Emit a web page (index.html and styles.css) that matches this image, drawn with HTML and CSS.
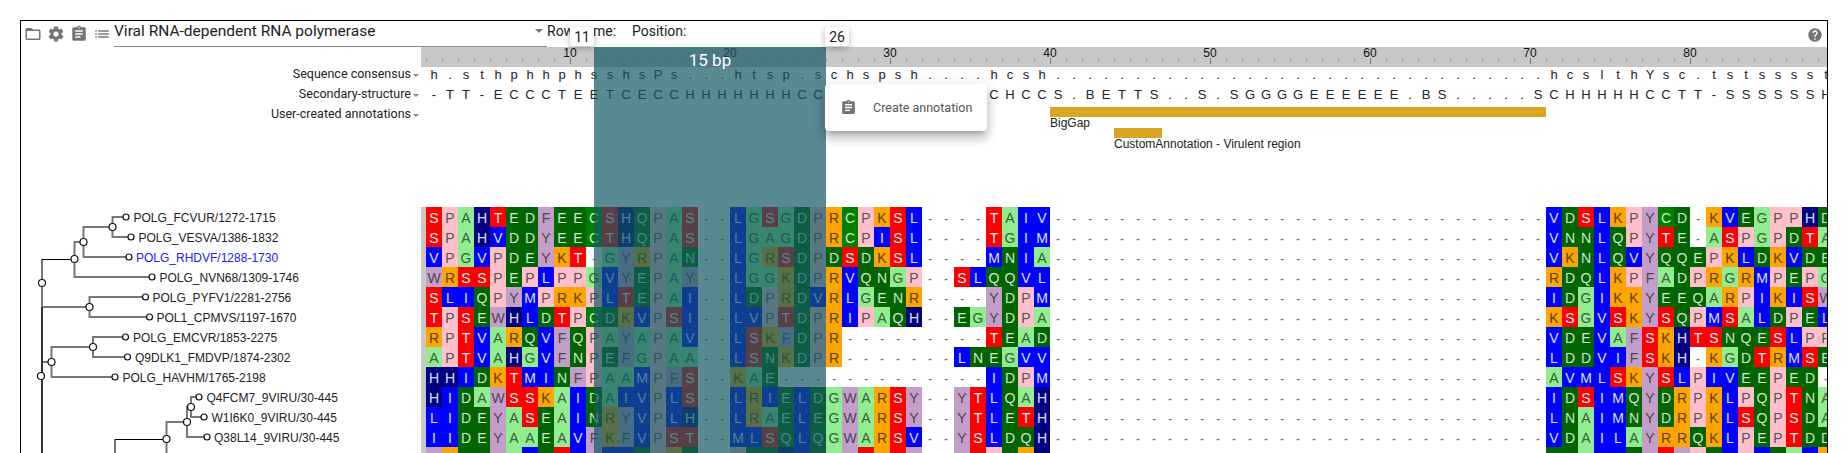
FILE: index.html
```html
<!DOCTYPE html>
<html lang="en">
<head>
    <meta charset="UTF-8">
    <title>Viral RNA-dependent RNA polymerase</title>
    <link rel="stylesheet" href="styles.css">
</head>
<body>
    <div class="frame">
        <div class="toolbar">
            <div class="toolbar-icons">
                <svg class="icon" viewBox="0 0 24 24"><path d="M20 6h-8l-2-2H4c-1.1 0-1.99.9-1.99 2L2 18c0 1.1.9 2 2 2h16c1.1 0 2-.9 2-2V8c0-1.1-.9-2-2-2zm0 12H4V8h16v10z"/></svg>
                <svg class="icon" viewBox="0 0 24 24"><path d="M19.43 12.98c.04-.32.07-.64.07-.98s-.03-.66-.07-.98l2.11-1.65c.19-.15.24-.42.12-.64l-2-3.46c-.12-.22-.39-.3-.61-.22l-2.49 1c-.52-.4-1.08-.73-1.69-.98l-.38-2.65C14.46 2.18 14.25 2 14 2h-4c-.25 0-.46.18-.49.42l-.38 2.65c-.61.25-1.17.59-1.69.98l-2.49-1c-.23-.09-.49 0-.61.22l-2 3.46c-.13.22-.07.49.12.64l2.11 1.65c-.04.32-.07.65-.07.98s.03.66.07.98l-2.11 1.65c-.19.15-.24.42-.12.64l2 3.46c.12.22.39.3.61.22l2.49-1c.52.4 1.08.73 1.69.98l.38 2.65c.03.24.24.42.49.42h4c.25 0 .46-.18.49-.42l.38-2.65c.61-.25 1.17-.59 1.69-.98l2.49 1c.23.09.49 0 .61-.22l2-3.46c.12-.22.07-.49-.12-.64l-2.11-1.65zM12 15.5c-1.93 0-3.5-1.57-3.5-3.5s1.57-3.5 3.5-3.5 3.5 1.57 3.5 3.5-1.57 3.5-3.5 3.5z"/></svg>
                <svg class="icon" viewBox="0 0 24 24"><path d="M19 3h-4.18C14.4 1.84 13.3 1 12 1c-1.3 0-2.4.84-2.82 2H5c-1.1 0-2 .9-2 2v14c0 1.1.9 2 2 2h14c1.1 0 2-.9 2-2V5c0-1.1-.9-2-2-2zm-7 0c.55 0 1 .45 1 1s-.45 1-1 1-1-.45-1-1 .45-1 1-1zm2 14H7v-2h7v2zm3-4H7v-2h10v2zm0-4H7V7h10v2z"/></svg>
                <svg class="icon" viewBox="0 0 24 24"><path d="M3 13h2v-2H3v2zm0 4h2v-2H3v2zm0-8h2V7H3v2zm4 4h14v-2H7v2zm0 4h14v-2H7v2zM7 7v2h14V7H7z"/></svg>
            </div>
            <div class="family-select">
                <span>Viral RNA-dependent RNA polymerase</span>
                <span class="select-arrow"></span>
            </div>
            <div class="readout">Row name:</div>
            <div class="readout">Position:</div>
            <svg class="icon help-icon" viewBox="0 0 24 24"><path d="M12 2C6.48 2 2 6.48 2 12s4.48 10 10 10 10-4.48 10-10S17.52 2 12 2zm1 17h-2v-2h2v2zm2.07-7.75l-.9.92C13.45 12.9 13 13.5 13 15h-2v-.5c0-1.1.45-2.1 1.17-2.83l1.24-1.26c.37-.36.59-.86.59-1.41 0-1.1-.9-2-2-2s-2 .9-2 2H8c0-2.21 1.79-4 4-4s4 1.79 4 4c0 .88-.36 1.68-.93 2.25z"/></svg>
        </div>

        <div class="main">
            <div class="left-pane">
                <div class="track-label">Sequence consensus<span class="track-arrow"></span></div>
                <div class="track-label">Secondary-structure<span class="track-arrow"></span></div>
                <div class="track-label">User-created annotations<span class="track-arrow"></span></div>

                <!-- viewBox uses page coordinates, easier to read off the nodes -->
                <svg class="tree" viewBox="21 207 400 246">
                    <g class="branch">
                        <path d="M126 217H112.5V237H131"/>
                        <path d="M112.5 227H83.5V257H129"/>
                        <path d="M83.5 242H74.5V277H152"/>
                        <path d="M42 259V307H89.5"/>
                        <path d="M145.5 297H89.5V317H149.5"/>
                        <path d="M125.5 337H93V357H127.5"/>
                        <path d="M93 347H51.5V377H115"/>
                        <path d="M51.5 362H42"/>
                        <path d="M199 397H191V417H204"/>
                        <path d="M191 407H187V437H207"/>
                        <path d="M187 422H166.5V453"/>
                        <path d="M115 453V439"/>
                    </g>
                    <g class="branch-dark">
                        <path d="M42 307V453"/>
                    </g>
                    <g class="branch-thin">
                        <path d="M42 259.5H74.5"/>
                        <path d="M115 439.5H166.5"/>
                    </g>
                    <g class="node">
                        <circle cx="112.5" cy="227" r="3.5"/>
                        <circle cx="83.5" cy="242" r="3.5"/>
                        <circle cx="74.5" cy="259" r="3.5"/>
                        <circle cx="42" cy="283" r="3.5"/>
                        <circle cx="89.5" cy="307" r="3.5"/>
                        <circle cx="93" cy="347" r="3.5"/>
                        <circle cx="51.5" cy="362" r="3.5"/>
                        <circle cx="41" cy="376" r="3.5"/>
                        <circle cx="191" cy="407" r="3.5"/>
                        <circle cx="187" cy="422" r="3.5"/>
                        <circle cx="166.5" cy="439" r="3.5"/>
                    </g>
                    <g class="node">
                        <circle cx="126" cy="217" r="3"/>
                        <circle cx="131" cy="237" r="3"/>
                        <circle cx="129" cy="257" r="3"/>
                        <circle cx="152" cy="277" r="3"/>
                        <circle cx="145.5" cy="297" r="3"/>
                        <circle cx="149.5" cy="317" r="3"/>
                        <circle cx="125.5" cy="337" r="3"/>
                        <circle cx="127.5" cy="357" r="3"/>
                        <circle cx="115" cy="377" r="3"/>
                        <circle cx="199" cy="397" r="3"/>
                        <circle cx="204" cy="417" r="3"/>
                        <circle cx="207" cy="437" r="3"/>
                    </g>
                    <g class="leaf-label">
                        <text x="133.5" y="222">POLG_FCVUR/1272-1715</text>
                        <text x="138.5" y="242">POLG_VESVA/1386-1832</text>
                        <text class="leaf-selected" x="136" y="262">POLG_RHDVF/1288-1730</text>
                        <text x="159.5" y="282">POLG_NVN68/1309-1746</text>
                        <text x="152.5" y="302">POLG_PYFV1/2281-2756</text>
                        <text x="156.5" y="322">POL1_CPMVS/1197-1670</text>
                        <text x="133" y="342">POLG_EMCVR/1853-2275</text>
                        <text x="135" y="362">Q9DLK1_FMDVP/1874-2302</text>
                        <text x="122.5" y="382">POLG_HAVHM/1765-2198</text>
                        <text x="206.5" y="402">Q4FCM7_9VIRU/30-445</text>
                        <text x="211.5" y="422">W1I6K0_9VIRU/30-445</text>
                        <text x="214" y="442">Q38L14_9VIRU/30-445</text>
                    </g>
                </svg>
            </div>

            <div class="right-pane">
                <div class="ruler" id="ruler"></div>
                <div class="track" id="consensus"></div>
                <div class="track" id="structure"></div>
                <div class="annotations">
                    <div class="annotation">
                        <div class="annotation-bar" style="margin-left: 629px; width: 496px;"></div>
                        <div class="annotation-name" style="margin-left: 629px;">BigGap</div>
                    </div>
                    <div class="annotation">
                        <div class="annotation-bar" style="margin-left: 693px; width: 48px;"></div>
                        <div class="annotation-name" style="margin-left: 693px;">CustomAnnotation - Virulent region</div>
                    </div>
                </div>
                <div class="msa" id="msa"></div>
            </div>
        </div>

        <!-- Selection overlay -->
        <div class="selection">15 bp</div>
        <div class="pos-tag pos-tag-start">11</div>
        <div class="pos-tag pos-tag-end">26</div>
        <div class="menu">
            <svg class="icon menu-icon" viewBox="0 0 24 24"><path d="M19 3h-4.18C14.4 1.84 13.3 1 12 1c-1.3 0-2.4.84-2.82 2H5c-1.1 0-2 .9-2 2v14c0 1.1.9 2 2 2h14c1.1 0 2-.9 2-2V5c0-1.1-.9-2-2-2zm-7 0c.55 0 1 .45 1 1s-.45 1-1 1-1-.45-1-1 .45-1 1-1zm2 14H7v-2h7v2zm3-4H7v-2h10v2zm0-4H7V7h10v2z"/></svg>
            <span>Create annotation</span>
        </div>
    </div>

    <script src="app.js"></script>
</body>
</html>
```

FILE: styles.css
```css
html, body {
    height: 100%;
    margin: 0;
    overflow: hidden;
    background-color: #ffffff;
}

body {
    padding: 20px 20px 0 20px;
    box-sizing: border-box;
    font-family: "Liberation Sans", Arial, sans-serif;
    font-size: 12px;
    color: #222222;
}

.frame {
    position: relative;
    width: 1808px;
    height: 433px;
    box-sizing: border-box;
    border: 1px solid #000000;
    border-bottom: none;
    overflow: hidden;
}

.toolbar {
    display: flex;
    height: 26px;
    padding-left: 3px;
    box-sizing: border-box;
    font-family: Roboto, sans-serif;
    font-size: 14px;
}

.toolbar-icons {
    display: flex;
    gap: 5px;
    padding-top: 4px;
}

.icon {
    width: 18px;
    height: 18px;
    fill: #757575;
    flex: none;
}

.family-select {
    display: flex;
    justify-content: space-between;
    width: 433px;
    height: 26px;
    margin-left: 3px;
    padding-top: 1px;
    box-sizing: border-box;
    border-bottom: 1px solid #8a8a8a;
    font-size: 15.5px;
    line-height: 18px;
    color: #222222;
}

.select-arrow {
    width: 0;
    height: 0;
    margin: 7px 4px 0 0;
    border-left: 4.5px solid transparent;
    border-right: 4.5px solid transparent;
    border-top: 4.5px solid #777777;
}

.readout {
    width: 85px;
    padding-top: 1px;
    line-height: 18px;
    color: #222222;
}

.help-icon {
    width: 16px;
    height: 16px;
    margin: 6px 4px 0 auto;
}

.main {
    display: flex;
}

.left-pane {
    width: 400px;
    flex: none;
    padding-top: 20px;
}

.track-label {
    display: flex;
    justify-content: flex-end;
    height: 20px;
    padding-right: 2px;
    font-family: Roboto, sans-serif;
    font-size: 12.5px;
    line-height: 14px;
    color: #222222;
}

.track-arrow {
    width: 0;
    height: 0;
    margin: 7px 0 0 2px;
    border-left: 3.5px solid transparent;
    border-right: 3.5px solid transparent;
    border-top: 3.5px solid #888888;
}

.tree {
    display: block;
    width: 400px;
    height: 246px;
    margin-top: 80px;
}

.branch path, .branch-dark path, .branch-thin path {
    fill: none;
}

.branch path {
    stroke: #777777;
    stroke-width: 2;
}

.branch-dark path {
    stroke: #333333;
    stroke-width: 2;
}

.branch-thin path {
    stroke: #000000;
    stroke-width: 1;
}

.node circle {
    fill: #ffffff;
    stroke: #111111;
    stroke-width: 1.2;
}

.leaf-label text {
    font-family: "Liberation Sans", Arial, sans-serif;
    font-size: 12px;
    fill: #222222;
}

.leaf-label .leaf-selected {
    fill: #2222ee;
}

.right-pane {
    flex: 1;
    min-width: 0;
}

.ruler {
    display: flex;
    height: 20px;
    padding-left: 5px;
    background-color: #c8c8c8;
}

.tick {
    width: 16px;
    flex: none;
}

.tick-label {
    width: 32px;
    height: 11px;
    margin-left: -16px;
    text-align: center;
    line-height: 13px;
    color: #111111;
}

.tick-mark {
    width: 1px;
    height: 4px;
    margin-top: 11px;
    background-color: #a0a0a0;
}

.tick-label + .tick-mark {
    height: 6px;
    margin-top: 0;
    background-color: #777777;
}

.track {
    display: flex;
    height: 20px;
    padding-left: 5px;
    font-size: 13px;
    line-height: 15px;
    color: #222222;
}

.annotations {
    height: 100px;
}

.annotation {
    height: 21px;
}

.annotation-bar {
    height: 10px;
    background-color: #daa520;
}

.annotation-name {
    height: 11px;
    line-height: 12px;
    margin-top: 0;
    white-space: nowrap;
}

.msa {
    border-left: 5px solid #c8c8c8;
}

.msa-row {
    display: flex;
    height: 20px;
    overflow: hidden;
    font-size: 14px;
    line-height: 22px;
}

.cell {
    width: 16px;
    flex: none;
    text-align: center;
}

/* residue colours */
.res-red { background-color: #ff0000; color: #f4f4f4; }
.res-pink { background-color: #ffc0cb; color: #555555; }
.res-light { background-color: #90ee90; color: #3c5c3c; }
.res-navy { background-color: #000080; color: #dde0f4; }
.res-dark { background-color: #006400; color: #d0e4d0; }
.res-green { background-color: #008000; color: #d0e8d0; }
.res-thistle { background-color: #c39ec8; color: #4c444e; }
.res-blue { background-color: #0000ff; color: #dde0fb; }
.res-orange { background-color: #ffa500; color: #5c4010; }
.res-gap { background-color: #ffffff; color: #777777; font-size: 11px; font-weight: bold; }

.selection {
    position: absolute;
    left: 573px;
    top: 26px;
    bottom: 0;
    width: 232px;
    background-color: rgba(19, 89, 100, 0.7);
    color: #ffffff;
    font-family: Roboto, sans-serif;
    font-size: 17px;
    line-height: 26px;
    text-align: center;
}

.pos-tag {
    position: absolute;
    top: 6px;
    width: 24px;
    height: 19px;
    border-radius: 3px;
    background-color: #ffffff;
    box-shadow: 0 2px 6px rgba(0, 0, 0, 0.3);
    font-family: Roboto, sans-serif;
    font-size: 14px;
    line-height: 20px;
    text-align: center;
    color: #222222;
}

.pos-tag-start {
    left: 549px;
}

.pos-tag-end {
    left: 804px;
}

.menu {
    position: absolute;
    left: 804px;
    top: 63px;
    display: flex;
    align-items: center;
    gap: 16px;
    width: 162px;
    height: 47px;
    padding: 0 0 1px 15px;
    box-sizing: border-box;
    border-radius: 4px;
    background-color: #ffffff;
    box-shadow: 0 5px 5px -3px rgba(0, 0, 0, 0.2), 0 8px 10px 1px rgba(0, 0, 0, 0.14), 0 3px 14px 2px rgba(0, 0, 0, 0.12);
    font-family: Roboto, sans-serif;
    font-size: 12.5px;
    color: #555555;
}

.menu-icon {
    width: 17px;
    height: 17px;
}
```

FILE: app.js
```js
const COLUMNS = 88;

const residueClass = {
    S: 'res-red', T: 'res-red',
    P: 'res-pink',
    A: 'res-light', G: 'res-light',
    H: 'res-navy',
    D: 'res-dark', E: 'res-dark', N: 'res-dark', Q: 'res-dark',
    C: 'res-green',
    F: 'res-thistle', Y: 'res-thistle', W: 'res-thistle',
    L: 'res-blue', I: 'res-blue', V: 'res-blue', M: 'res-blue',
    K: 'res-orange', R: 'res-orange',
    '-': 'res-gap'
};

const gap = '-'.repeat(31);

// left block + middle block + long gap + right block
const sequences = [
    'SPAHTEDFEECSHQPAS--LGSGDP' + 'RCPKSL----TAIV' + gap + 'VDSLKPYCD-KVEGPPHD',
    'SPAHVDDYEECTHQPAS--LGAGDP' + 'RCPISL----TGIM' + gap + 'VNNLQPYTE-ASPGPDTA',
    'VPGVPDEYKT-GYRPAN--LGRSDP' + 'DSDKSL----MNIA' + gap + 'VKNLQVYQQEPKLDKVDE',
    'WRSSPEPLPPGVYEPAY--LGGKDP' + 'RVQNGP--SLQQVL' + gap + 'RDQLKPFADPRGRMPEPG',
    'SLIQPYMPRKPLTEPAI--LDPRDV' + 'RLGENR----YDPM' + gap + 'IDGIKKYEEQARPIKISW',
    'TPSEWHLDTPCDKVPSI--LVPTDP' + 'RIPAQH--EGYDPA' + gap + 'KSGVSKYSQPMSALDPEL',
    'RPTVARQVFQPAYAPAV--LSKFDP' + 'R---------TEAD' + gap + 'VDEVAFSKHTSNQESLPP',
    'APTVAHGVFNPEFGPAA--LSNKDP' + 'R-------LNEGVV' + gap + 'LDDVIFSKH-KGDTRMSE',
    'HHIDKTMINFPAAMPFS--KAE---' + '----------IDPM' + gap + 'AVMLSKYSLPIVEEPED-',
    'HIDAWSSKAIDAIVPLS--LRIELD' + 'GWARSY--YTLQAH' + gap + 'IDSIMQYDRPKLPQPTNA',
    'LIDEYASEAINRYVPLH--LRAELE' + 'GWARSY--YTLETH' + gap + 'LNAIMNYDRPKLSQPSDA',
    'IIDEYAAEAVFKFVPST--MLSQLQ' + 'GWARSV--YSLDQH' + gap + 'VDAILAYRRQKLPEPTDD',
    'FKDEYALETIFLIQPRE--PDEHLQ' + 'GWTRSY--YSPDKH' + gap + 'EDALIQYSFPNIPVEALK'
];

const consensus = 'h.sthphhphs' + 'shsPs...htsp.s' + 'chspsh' + '....' + 'hcsh' + '.'.repeat(31) + 'hcslthYsc.tstsssst';

const structure = '-TT-ECCCTEE' + 'TCECCHHHHHHHCC' + 'CCCCCCCCCC' + 'CHCC' + 'S.BETTS..S.SGGGGEEEEEE.BS.....S' + 'CHHHHHCCTT-SSSSSSH';

function makeCell(letter, className) {
    const cell = document.createElement('span');
    cell.className = className;
    cell.textContent = letter;
    return cell;
}

function fillTrack(id, text) {
    const track = document.getElementById(id);
    for (const letter of text) {
        track.appendChild(makeCell(letter, 'cell'));
    }
}

function buildRuler() {
    const ruler = document.getElementById('ruler');
    for (let position = 1; position <= COLUMNS; position++) {
        const tick = document.createElement('div');
        tick.className = 'tick';
        if (position % 10 === 0) {
            const label = document.createElement('div');
            label.className = 'tick-label';
            label.textContent = position;
            tick.appendChild(label);
        }
        const mark = document.createElement('div');
        mark.className = 'tick-mark';
        tick.appendChild(mark);
        ruler.appendChild(tick);
    }
}

function buildAlignment() {
    const msa = document.getElementById('msa');
    sequences.forEach(sequence => {
        const row = document.createElement('div');
        row.className = 'msa-row';
        for (const letter of sequence) {
            row.appendChild(makeCell(letter, 'cell ' + residueClass[letter]));
        }
        msa.appendChild(row);
    });
}

buildRuler();
fillTrack('consensus', consensus);
fillTrack('structure', structure);
buildAlignment();
```
